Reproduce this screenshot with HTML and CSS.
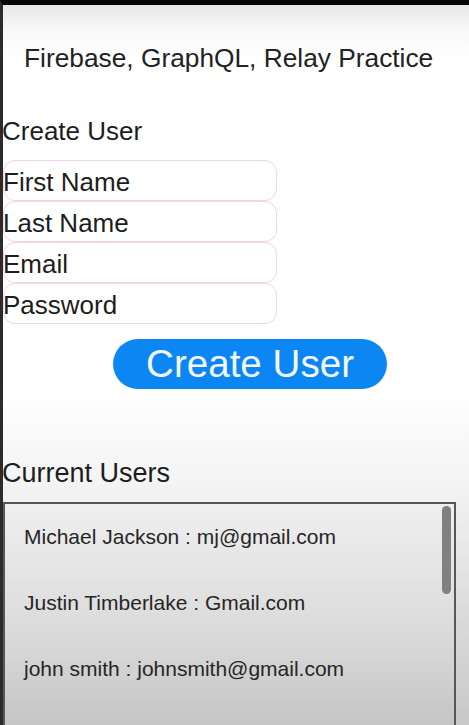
FILE: index.html
```html
<!DOCTYPE html>
<html lang="en">
<head>
<meta charset="utf-8">
<title>Firebase, GraphQL, Relay Practice</title>
<link rel="stylesheet" href="styles.css">
</head>
<body>
<div class="screen">
  <h1 class="title">Firebase, GraphQL, Relay Practice</h1>
  <h2 class="section-label">Create User</h2>
  <form class="user-form">
    <input class="field" type="text" placeholder="First Name">
    <input class="field" type="text" placeholder="Last Name">
    <input class="field" type="text" placeholder="Email">
    <input class="field" type="password" placeholder="Password">
    <button class="create-btn" type="button">Create User</button>
  </form>
  <h2 class="section-label current">Current Users</h2>
  <div class="user-list">
    <div class="user-row">Michael Jackson : mj@gmail.com</div>
    <div class="user-row">Justin Timberlake : Gmail.com</div>
    <div class="user-row">john smith : johnsmith@gmail.com</div>
    <div class="scroll-thumb"></div>
  </div>
</div>
</body>
</html>
```

FILE: styles.css
```css
html, body {
  margin: 0;
  padding: 0;
  height: 100%;
  overflow: hidden;
}

body {
  font-family: "Liberation Sans", Arial, sans-serif;
  color: #1f1f1f;
  background: linear-gradient(to bottom, #e4e4e4 0px, #f8f8f8 30px, #ffffff 60px, #ffffff 390px, #f4f4f4 480px, #dadada 620px, #c8c8c8 725px);
}

.screen {
  height: 720px;
  border-top: 5px solid #050505;
  border-left: 3px solid #2b2b2b;
  display: flex;
  flex-direction: column;
  align-items: flex-start;
}

.title {
  margin: 38px 0 0 21px;
  font-size: 26.3px;
  line-height: 30px;
  font-weight: normal;
  color: #222;
}

.section-label {
  margin: 43px 0 0 -1px;
  font-size: 26px;
  line-height: 30px;
  font-weight: normal;
  color: #1d1d1d;
}

.section-label.current {
  margin-top: 69px;
  font-size: 27px;
}

.user-form {
  margin-top: 14px;
  display: flex;
  flex-direction: column;
  align-items: flex-start;
}

.field {
  box-sizing: border-box;
  width: 274px;
  height: 41px;
  margin: 0;
  padding: 3px 0 0 0;
  text-indent: -1px;
  border: 1px solid #f0d7df;
  border-radius: 12px;
  background: #ffffff;
  font-family: "Liberation Sans", Arial, sans-serif;
  font-size: 26px;
  color: #1d1d1d;
  outline: none;
}

.field::placeholder {
  color: #1d1d1d;
  opacity: 1;
}

.create-btn {
  margin: 15px 0 0 110px;
  width: 274px;
  height: 50px;
  padding: 0;
  border: none;
  border-radius: 25px;
  background: #0c86f2;
  color: #f4f9ff;
  font-family: "Liberation Sans", Arial, sans-serif;
  font-size: 38.6px;
  line-height: 50px;
}

.user-list {
  position: relative;
  box-sizing: border-box;
  margin-top: 14px;
  width: 453px;
  height: 223px;
  border: 2px solid #575757;
  border-bottom: none;
  background: linear-gradient(to bottom, #efefef 0px, #dcdcdc 120px, #c5c5c5 223px);
  padding-left: 19px;
}

.user-row {
  height: 66px;
  font-size: 21px;
  line-height: 66px;
  color: #262626;
}

.scroll-thumb {
  position: absolute;
  top: 2px;
  right: 3px;
  width: 9px;
  height: 88px;
  border-radius: 5px;
  background: #808080;
}
```
